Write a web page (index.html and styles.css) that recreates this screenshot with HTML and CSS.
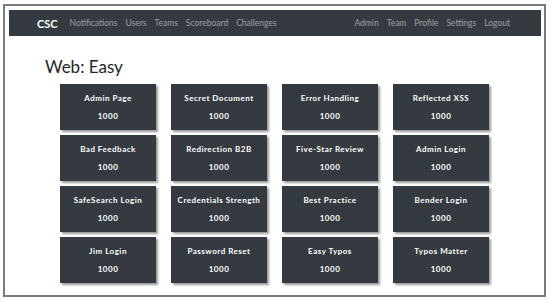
FILE: index.html
```html
<!DOCTYPE html>
<html lang="en">
<head>
    <meta charset="UTF-8">
    <title>CSC</title>
    <link rel="stylesheet" href="styles.css">
</head>
<body>
    <div class="frame">
        <nav class="navbar">
            <div class="nav-left">
                <a href="#" class="brand">CSC</a>
                <a href="#">Notifications</a>
                <a href="#">Users</a>
                <a href="#">Teams</a>
                <a href="#">Scoreboard</a>
                <a href="#">Challenges</a>
            </div>
            <div class="nav-right">
                <a href="#">Admin</a>
                <a href="#">Team</a>
                <a href="#">Profile</a>
                <a href="#">Settings</a>
                <a href="#">Logout</a>
            </div>
        </nav>

        <h2 class="category">Web: Easy</h2>

        <div class="board">
            <div class="chal"><div class="chal-name">Admin Page</div><div class="chal-value">1000</div></div>
            <div class="chal"><div class="chal-name">Secret Document</div><div class="chal-value">1000</div></div>
            <div class="chal"><div class="chal-name">Error Handling</div><div class="chal-value">1000</div></div>
            <div class="chal"><div class="chal-name">Reflected XSS</div><div class="chal-value">1000</div></div>
            <div class="chal"><div class="chal-name">Bad Feedback</div><div class="chal-value">1000</div></div>
            <div class="chal"><div class="chal-name">Redirection B2B</div><div class="chal-value">1000</div></div>
            <div class="chal"><div class="chal-name">Five-Star Review</div><div class="chal-value">1000</div></div>
            <div class="chal"><div class="chal-name">Admin Login</div><div class="chal-value">1000</div></div>
            <div class="chal"><div class="chal-name">SafeSearch Login</div><div class="chal-value">1000</div></div>
            <div class="chal"><div class="chal-name">Credentials Strength</div><div class="chal-value">1000</div></div>
            <div class="chal"><div class="chal-name">Best Practice</div><div class="chal-value">1000</div></div>
            <div class="chal"><div class="chal-name">Bender Login</div><div class="chal-value">1000</div></div>
            <div class="chal"><div class="chal-name">Jim Login</div><div class="chal-value">1000</div></div>
            <div class="chal"><div class="chal-name">Password Reset</div><div class="chal-value">1000</div></div>
            <div class="chal"><div class="chal-name">Easy Typos</div><div class="chal-value">1000</div></div>
            <div class="chal"><div class="chal-name">Typos Matter</div><div class="chal-value">1000</div></div>
        </div>
    </div>
</body>
</html>
```

FILE: styles.css
```css
body {
    margin: 0;
    background-color: #fff;
    font-family: Lato, "Open Sans", sans-serif;
}

.frame {
    margin: 4px 0 0 3px;
    padding: 4px 3px 0 4px;
    box-sizing: border-box;
    width: 543px;
    height: 293px;
    border: solid 2px #7b7b7b;
}

.navbar {
    display: flex;
    justify-content: space-between;
    align-items: center;
    height: 26px;
    padding: 0 31px 0 28px;
    background-color: #343a40;
}

.nav-left,
.nav-right {
    display: flex;
    align-items: center;
    gap: 8px;
}

.navbar a {
    color: rgba(255, 255, 255, 0.5);
    font-size: 8.5px;
    text-decoration: none;
}

.navbar .brand {
    color: #fff;
    font-size: 11px;
    font-weight: bold;
    margin-right: 4px;
}

.category {
    margin: 21px 0 0 36px;
    font-size: 17px;
    font-weight: normal;
    color: #212529;
    line-height: 20px;
}

.board {
    display: grid;
    grid-template-columns: repeat(4, 96px);
    grid-auto-rows: 46px;
    column-gap: 15px;
    row-gap: 5px;
    margin: 7px 0 0 51px;
}

.chal {
    background-color: #343a40;
    color: #fff;
    box-shadow: 2px 2px 2px #9a9a9a;
    display: flex;
    flex-direction: column;
    align-items: center;
    justify-content: center;
    gap: 8px;
    font-size: 8px;
    font-weight: bold;
    letter-spacing: 0.5px;
}
```
